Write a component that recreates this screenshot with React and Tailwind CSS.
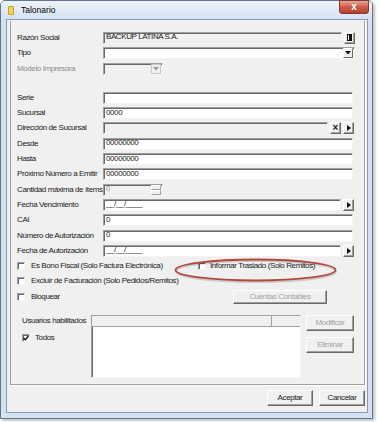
import React from "react";

const sunken =
  "border border-t-[#a0a0a0] border-l-[#a0a0a0] border-r-[#f4f4f4] border-b-[#f4f4f4] shadow-[inset_1px_1px_0_#696969]";
const raised =
  "border border-t-white border-l-white border-r-[#696969] border-b-[#696969] shadow-[inset_-1px_-1px_0_#a0a0a0] bg-[#f0f0f0]";

const Field = ({ w, gray, children, right }) => (
  <div
    className={`relative h-[12px] ${sunken} ${gray ? "bg-[#f0f0f0]" : "bg-white"} flex items-center pl-[2px] leading-none shrink-0`}
    style={{ width: w }}
  >
    <span className="whitespace-nowrap -mt-[1px]">{children}</span>
    {right}
  </div>
);

const SmallBtn = ({ children, className = "" }) => (
  <div className={`w-[11px] h-[12px] ${raised} flex items-center justify-center shrink-0 ${className}`}>
    {children}
  </div>
);

const ArrowRight = () => (
  <svg width="4" height="6" viewBox="0 0 4 6">
    <path d="M0 0 L4 3 L0 6 Z" fill="#111" />
  </svg>
);

const ArrowDown = ({ color = "#111" }) => (
  <svg width="6" height="4" viewBox="0 0 6 4">
    <path d="M0 0 L6 0 L3 3.5 Z" fill={color} />
  </svg>
);

const Row = ({ label, gray, children }) => (
  <div className="h-[15.3px] flex items-center">
    <div className={`w-[86px] shrink-0 whitespace-nowrap overflow-hidden ${gray ? "text-[#8c8c8c]" : ""}`}>
      {label}
    </div>
    <div className="flex items-center">{children}</div>
  </div>
);

const Check = ({ checked }) => (
  <div className={`w-[8px] h-[8px] bg-white ${sunken} flex items-center justify-center shrink-0`}>
    {checked && (
      <svg width="6" height="6" viewBox="0 0 6 6">
        <path d="M0.5 3 L2.3 4.8 L5.5 1" stroke="#111" strokeWidth="1.4" fill="none" />
      </svg>
    )}
  </div>
);

const Btn = ({ w, children, disabled }) => (
  <div
    className={`h-[16px] ${raised} flex items-center justify-center shrink-0 ${disabled ? "text-[#a3a3a3]" : ""}`}
    style={{ width: w }}
  >
    {children}
  </div>
);

export default function App() {
  return (
    <div className="w-[380px] h-[422px] bg-white relative font-['Liberation_Sans',Arial,sans-serif] text-[8px] tracking-[-0.4px] text-[#1a1a1a]">
      <div className="w-[373px] h-[419px] border border-[#63758f] rounded-t-[5px] bg-[#d4e1f1] flex flex-col pl-[5px] pr-[4px] pb-[5px] shadow-[2px_2px_3px_rgba(0,0,0,0.25)] relative">
        {/* title bar */}
        <div className="h-[18px] flex items-center -ml-[5px] -mr-[4px] pl-[7px] bg-gradient-to-b from-[#eef3fa] to-[#d4e1f1] rounded-t-[4px]">
          <div className="w-[6px] h-[9px] bg-[#f3d25c] border border-[#c9a22a] rounded-[1px] mr-[7px]" />
          <span className="text-[8.5px] tracking-normal text-black">Talonario</span>
        </div>
        <div className="absolute top-[-1px] right-[3px] w-[30px] h-[14px] rounded-b-[3px] border border-[#7a3a30] bg-gradient-to-b from-[#e7a796] via-[#cc5b4a] to-[#b8402c] flex items-center justify-center">
          <span className="text-white text-[10px] font-bold leading-none tracking-normal">x</span>
        </div>

        {/* client */}
        <div className="flex-1 bg-[#f0f0f0] border border-[#8b9bb3] flex flex-col">
          <div className="ml-[3px] mt-[1px] w-[355px] h-[364px] border-l border-r border-b border-[#a0a0a0] shadow-[1px_1px_0_white] pl-[6px] pt-[9.3px]">
            <Row label="Razón Social">
              <Field w={239} gray>BACKUP LATINA S.A.</Field>
              <SmallBtn className="ml-[2px]">
                <div className="w-[5px] h-[7px] border border-[#111] flex items-center justify-end">
                  <div className="w-[2px] h-[5px] bg-[#111]" />
                </div>
              </SmallBtn>
            </Row>
            <Row label="Tipo">
              <Field
                w={252}
                right={
                  <div className="absolute right-[1px] top-[0px] w-[10px] h-[10px] border border-t-white border-l-white border-r-[#696969] border-b-[#696969] bg-[#f0f0f0] flex items-center justify-center">
                    <ArrowDown />
                  </div>
                }
              />
            </Row>
            <Row label="Modelo Impresora" gray>
              <Field
                w={60}
                gray
                right={
                  <div className="absolute right-[1px] top-[0px] w-[10px] h-[10px] border border-[#c8c8c8] bg-[#f0f0f0] flex items-center justify-center">
                    <ArrowDown color="#9a9a9a" />
                  </div>
                }
              />
            </Row>
            <div className="h-[14px]" />
            <Row label="Serie">
              <Field w={250} />
            </Row>
            <Row label="Sucursal">
              <Field w={250}>0000</Field>
            </Row>
            <Row label="Dirección de Sucursal">
              <Field w={225} gray />
              <SmallBtn className="ml-[2px]">
                <span className="text-[10px] font-bold leading-none tracking-normal">×</span>
              </SmallBtn>
              <SmallBtn className="ml-[2px]">
                <ArrowRight />
              </SmallBtn>
            </Row>
            <Row label="Desde">
              <Field w={250}>00000000</Field>
            </Row>
            <Row label="Hasta">
              <Field w={250}>00000000</Field>
            </Row>
            <Row label="Próximo Número a Emitir">
              <Field w={250}>00000000</Field>
            </Row>
            <Row label="Cantidad máxima de ítems">
              <Field
                w={60}
                gray
                right={
                  <div className="absolute right-[1px] top-0 w-[10px] h-[10px] flex flex-col">
                    <div className="flex-1 border border-t-white border-l-white border-r-[#a0a0a0] border-b-[#a0a0a0]" />
                    <div className="flex-1 border border-t-white border-l-white border-r-[#a0a0a0] border-b-[#a0a0a0]" />
                  </div>
                }
              >
                <span className="text-[#9a9a9a]">0</span>
              </Field>
            </Row>
            <Row label="Fecha Vencimiento">
              <Field w={238}>__/__/____</Field>
              <SmallBtn className="ml-[2px]">
                <ArrowRight />
              </SmallBtn>
            </Row>
            <Row label="CAI">
              <Field w={250}>0</Field>
            </Row>
            <Row label="Número de Autorización">
              <Field w={250}>0</Field>
            </Row>
            <Row label="Fecha de Autorización">
              <Field w={238}>__/__/____</Field>
              <SmallBtn className="ml-[2px]">
                <ArrowRight />
              </SmallBtn>
            </Row>

            <div className="h-[15.3px] flex items-center">
              <Check />
              <span className="ml-[6px] w-[167px] whitespace-nowrap">Es Bono Fiscal (Solo Factura Electrónica)</span>
              <Check />
              <span className="ml-[4px] whitespace-nowrap">Informar Traslado (Solo Remitos)</span>
            </div>
            <div className="h-[15.3px] flex items-center">
              <Check />
              <span className="ml-[6px]">Excluir de Facturación (Solo Pedidos/Remitos)</span>
            </div>
            <div className="h-[15.3px] flex items-center">
              <Check />
              <span className="ml-[6px] w-[202px]">Bloquear</span>
              <div
                className={`h-[14px] w-[94px] ${raised} flex items-center justify-center text-[#a3a3a3]`}
              >
                Cuentas Contables
              </div>
            </div>

            <div className="flex mt-[10.6px]">
              <div className="w-[74px] pl-[5px] shrink-0">
                <div className="h-[12px] flex items-center whitespace-nowrap">Usuarios habilitados</div>
                <div className="flex items-center mt-[5px]">
                  <Check checked />
                  <span className="ml-[5px]">Todos</span>
                </div>
              </div>
              <div className={`w-[210px] h-[63px] bg-white ${sunken} flex flex-col`}>
                <div className="h-[11px] bg-[#f0f0f0] border-b border-[#a0a0a0] flex">
                  <div className="w-[180px] border-r border-[#a0a0a0]" />
                </div>
              </div>
              <div className="ml-[5px] flex flex-col gap-[6px]">
                <Btn w={48} disabled>Modificar</Btn>
                <Btn w={48} disabled>Eliminar</Btn>
              </div>
            </div>
          </div>

          <div className="flex justify-end gap-[6px] pt-[5px] pr-[2px]">
            <Btn w={46}>Aceptar</Btn>
            <Btn w={46}>Cancelar</Btn>
          </div>
        </div>
      </div>

      {/* annotation */}
      <svg className="absolute left-[172px] top-[256px]" width="168" height="30" viewBox="0 0 168 30">
        <ellipse cx="84" cy="15.5" rx="80" ry="10.5" fill="none" stroke="rgba(0,0,0,0.15)" strokeWidth="2" />
        <ellipse cx="83.5" cy="14" rx="80" ry="10.5" fill="none" stroke="#b3473a" strokeWidth="1.8" />
      </svg>
    </div>
  );
}
